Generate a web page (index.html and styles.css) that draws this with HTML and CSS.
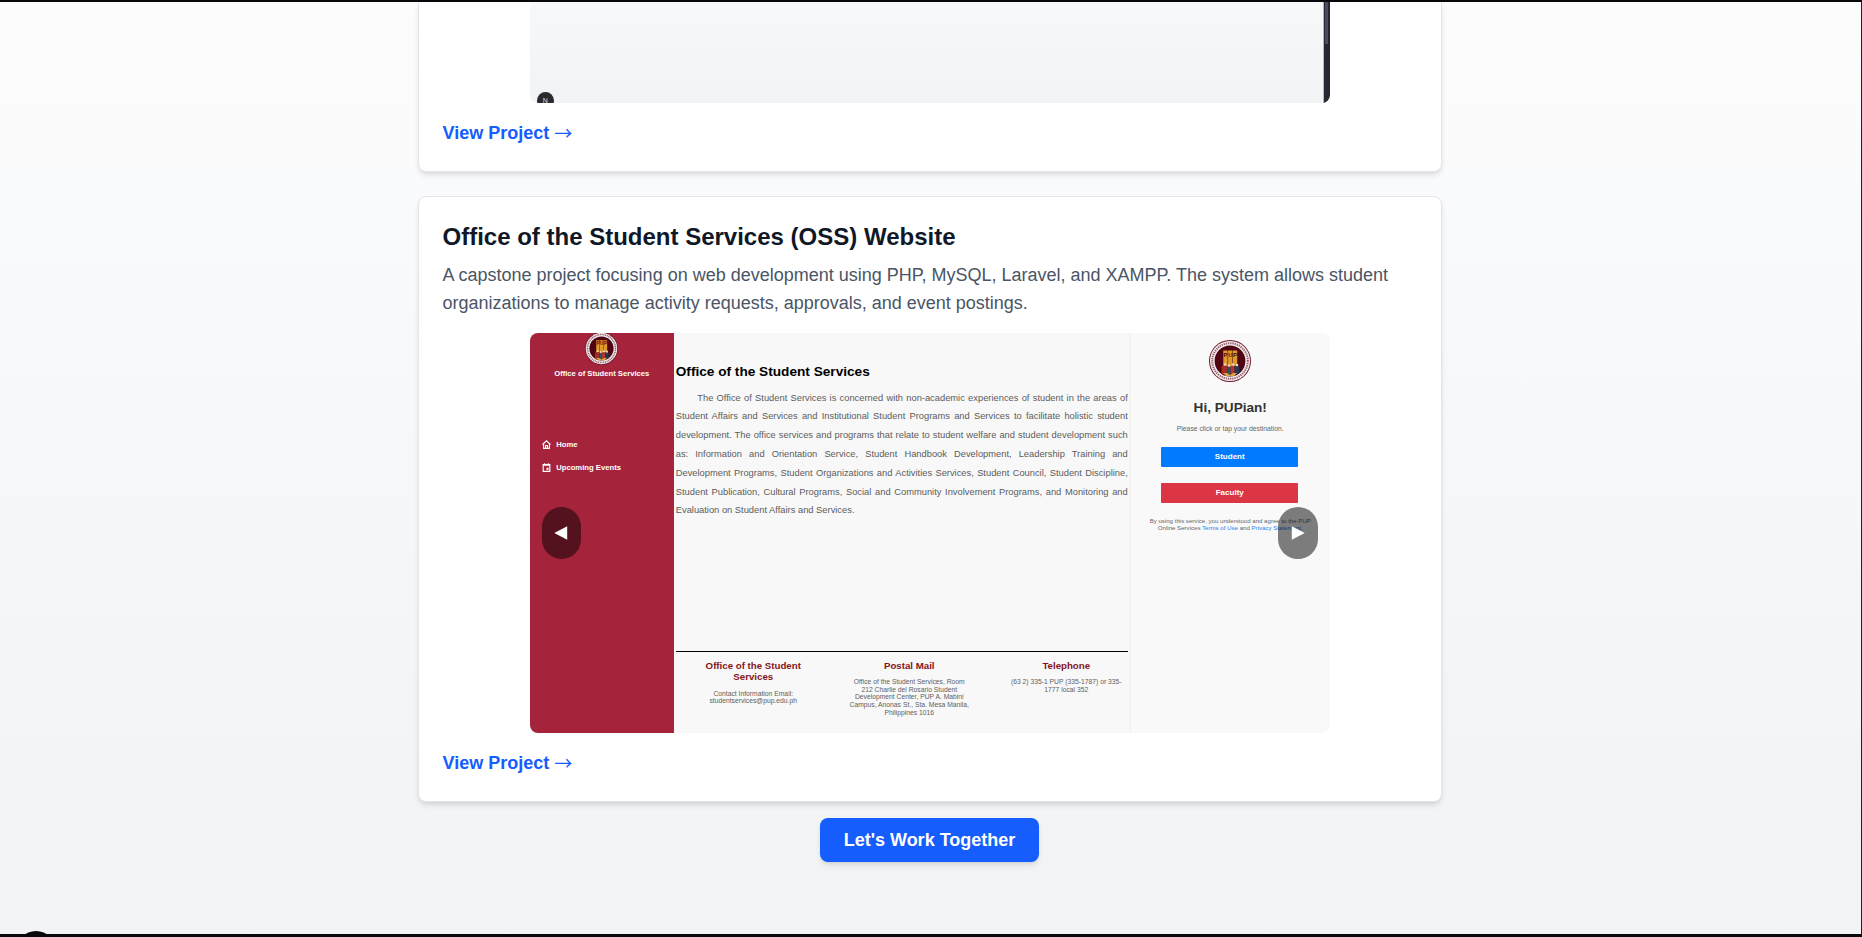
FILE: index.html
```html
<!DOCTYPE html>
<html lang="en">
<head>
<meta charset="utf-8">
<title>Projects</title>
<link rel="stylesheet" href="styles.css">
</head>
<body>
<svg class="defs" width="0" height="0" aria-hidden="true">
  <symbol id="seal" viewBox="0 0 42 42">
    <circle cx="21" cy="21" r="21" fill="#6d1a2c"/>
    <circle cx="21" cy="21" r="20" fill="#f4eeee"/>
    <circle cx="21" cy="21" r="17.8" fill="none" stroke="#96606b" stroke-width="2" stroke-dasharray="1.3 .9"/>
    <circle cx="21" cy="21" r="15.4" fill="#4f0513"/>
    <path d="M14.3 10.5h4.3v16h-4.3zM19.1 10.5h4.3v16h-4.3zM23.9 10.5h4.3v16h-4.3z" fill="#e09a2b"/>
    <path d="M12.6 26l4-1 2 2v7h-6z" fill="#a82a22"/>
    <path d="M18.6 26l3 1v8h-3z" fill="#1d5b6d"/>
    <path d="M21.6 26h4v8h-4z" fill="#b8322a"/>
    <path d="M25.6 25.5l4.6 1v7h-4.6z" fill="#1f3c58"/>
    <path d="M14 33h4l3 2 3-2h4l-3 3h-8z" fill="#d9a441"/>
    <circle cx="16" cy="24.5" r="1.3" fill="#f3d5c0"/><circle cx="20" cy="25.5" r="1.3" fill="#f3d5c0"/>
    <circle cx="24" cy="24.5" r="1.3" fill="#f3d5c0"/><circle cx="28" cy="25" r="1.3" fill="#f3d5c0"/>
    <text x="16.5" y="17" class="seal-letter">P</text><text x="21.3" y="17" class="seal-letter">U</text><text x="26.1" y="17" class="seal-letter">P</text>
  </symbol>
</svg>
<div class="page">
  <main class="column">
    <article class="card card-first">
      <div class="shot shot-first">
        <div class="shot-page"><span class="dev-dot">N</span></div>
        <div class="shot-scroll"><div class="shot-thumb"></div></div>
      </div>
      <a class="link">View Project <span class="link-arrow">→</span></a>
    </article>

    <article class="card">
      <h3 class="title">Office of the Student Services (OSS) Website</h3>
      <p class="desc">A capstone project focusing on web development using PHP, MySQL, Laravel, and XAMPP. The system allows student organizations to manage activity requests, approvals, and event postings.</p>
      <div class="shot oss">
        <aside class="side">
          <svg class="side-logo"><use href="#seal"/></svg>
          <div class="side-name">Office of Student Services</div>
          <nav class="side-nav">
            <div class="side-item"><svg viewBox="0 0 10 10" class="side-icon"><path d="M.6 5L5 .9 9.4 5M1.8 4.3v5h6.4v-5M4 9V6.2h2V9" fill="none" stroke="#fff" stroke-width="1.2"/></svg>Home</div>
            <div class="side-item"><svg viewBox="0 0 10 10" class="side-icon"><path d="M1.3 1.7h7.4v7.6H1.3zM1.3 2.4h7.4M3 .3v1.6M7 .3v1.6" fill="none" stroke="#fff" stroke-width="1.3"/><path d="M5 5.3h2.3v2.5H5z" fill="#fff"/></svg>Upcoming Events</div>
          </nav>
        </aside>
        <section class="about">
          <h4 class="about-title">Office of the Student Services</h4>
          <div class="about-text">
            <div class="row first">The Office of Student Services is concerned with non-academic experiences of student in the areas of</div>
            <div class="row">Student Affairs and Services and Institutional Student Programs and Services to facilitate holistic student</div>
            <div class="row">development. The office services and programs that relate to student welfare and student development such</div>
            <div class="row">as: Information and Orientation Service, Student Handbook Development, Leadership Training and</div>
            <div class="row">Development Programs, Student Organizations and Activities Services, Student Council, Student Discipline,</div>
            <div class="row">Student Publication, Cultural Programs, Social and Community Involvement Programs, and Monitoring and</div>
            <div class="row last">Evaluation on Student Affairs and Services.</div>
          </div>
          <div class="contacts">
            <div class="contact"><h5>Office of the Student<br>Services</h5><p>Contact Information Email:<br>studentservices@pup.edu.ph</p></div>
            <div class="contact"><h5>Postal Mail</h5><p>Office of the Student Services, Room<br>212 Charlie del Rosario Student<br>Development Center, PUP A. Mabini<br>Campus, Anonas St., Sta. Mesa Manila,<br>Philippines 1016</p></div>
            <div class="contact"><h5>Telephone</h5><p>(63 2) 335-1 PUP (335-1787) or 335-<br>1777 local 352</p></div>
          </div>
        </section>
        <section class="login">
          <svg class="login-logo"><use href="#seal"/></svg>
          <div class="hi">Hi, PUPian!</div>
          <div class="hint">Please click or tap your destination.</div>
          <div class="choice student">Student</div>
          <div class="choice faculty">Faculty</div>
          <div class="terms">By using this service, you understood and agree to the PUP<br>Online Services <span>Terms of Use</span> and <span>Privacy Statement</span>.</div>
        </section>
        <button class="arrow prev" aria-label="Previous"><svg viewBox="0 0 14 14"><path d="M13.2.3v13.4L.3 7z" fill="#fff"/></svg></button>
        <button class="arrow next" aria-label="Next"><svg viewBox="0 0 14 14"><path d="M.8.3v13.4L13.7 7z" fill="#fff"/></svg></button>
      </div>
      <a class="link">View Project <span class="link-arrow">→</span></a>
    </article>
    <a class="cta">Let's Work Together</a>
  </main>
  <div class="corner-dot"></div>
</div>
</body>
</html>
```
FILE: styles.css
```css
* { box-sizing: border-box; margin: 0; padding: 0; }
body { font-family: "Liberation Sans", Arial, sans-serif; overflow: hidden; }
.defs { display: none; }
.page {
  position: relative;
  width: 1862px; height: 937px; overflow: hidden;
  border-top: 2px solid #08070b; border-bottom: 3px solid #08070b; border-right: 1px solid #1c2033;
  background: linear-gradient(#fcfcfd 0, #f9fafb 240px, #f3f4f6 760px, #f2f3f5 100%);
}
.column { width: 1024px; margin-left: 418px; display: flex; flex-direction: column; align-items: center; }
.card {
  width: 100%; background: #fff; border: 1px solid #e4e6eb; border-radius: 8px; padding: 24px 24px 24px 23.5px;
  box-shadow: 0 4px 6px -1px rgba(0,0,0,.1), 0 2px 4px -2px rgba(0,0,0,.1);
}
.card-first { border-top: 0; border-radius: 0 0 8px 8px; padding-top: 0; margin-bottom: 24px; }
.title { font-size: 24px; line-height: 32px; font-weight: 700; color: #101828; margin-bottom: 8px; }
.desc { font-size: 18px; line-height: 28px; color: #4a5565; margin-bottom: 16px; }
.link { display: block; height: 28px; font-size: 18px; line-height: 28px; font-weight: 700; color: #155dfc; }
.link-arrow { font-family: "Noto Sans CJK JP", sans-serif; font-weight: 400; line-height: 1; vertical-align: -1px; }
.shot { position: relative; width: 800px; height: 400px; margin: 0 auto 16px; border-radius: 8px; overflow: hidden; display: flex; }
.shot-first { height: 101px; border-radius: 0 0 8px 8px; }
.shot-page { flex: 1; display: flex; align-items: flex-end; padding-left: 7px; background: linear-gradient(#f7f8fa, #f2f3f5); }
.dev-dot { width: 17px; height: 17px; margin-bottom: -6px; border-radius: 50%; background: #2b2b2b; color: #ddd; font-size: 7px; line-height: 17px; text-align: center; }
.shot-scroll { width: 7px; border-left: 1px solid #b7bac2; background: #242832; padding: 0 2px 0 1px; }
.shot-thumb { height: 42px; background: #4a4c66; }

.oss { background: #f8f8f8; }
.side { width: 144px; background: #a6243b; color: #fff; display: flex; flex-direction: column; align-items: center; }
.side-logo { width: 33px; height: 33px; margin-top: -1px; }
.side-name { font-size: 7.65px; font-weight: 700; line-height: 10px; margin-top: 4px; white-space: nowrap; }
.side-nav { align-self: stretch; margin-top: 58px; padding-left: 12px; }
.side-item { display: flex; align-items: center; gap: 5.4px; height: 14px; margin-bottom: 9.6px; font-size: 7.7px; font-weight: 700; white-space: nowrap; }
.side-icon { width: 9px; height: 9px; }
.about { width: 457px; padding: 0 1px 0 2px; border-right: 2px solid #f3f3f3; }
.about-title { margin-top: 30.5px; font-size: 13.65px; line-height: 16px; color: #000; white-space: nowrap; }
.about-text { margin-top: 9.2px; color: #5c5c5c; font-size: 9.33px; }
.row { height: 18.8px; line-height: 18.8px; text-align: justify; text-align-last: justify; white-space: nowrap; }
.first { padding-left: 21.5px; }
.last { text-align-last: left; }
.contacts { margin-top: 130.3px; border-top: 1px solid #000; padding-top: 8px; display: grid; grid-template-columns: 155px 157px 157px; }
.contact { text-align: center; white-space: nowrap; }
.contact:nth-child(n+2) { margin-left: -0.5px; margin-right: -0.5px; }
.contact h5 { font-size: 9.7px; line-height: 11.8px; color: #851420; }
.contact p { margin-top: 6.6px; font-size: 6.75px; line-height: 7.65px; color: #606060; }
.login { flex: 1; background: #f9f9f9; display: flex; flex-direction: column; align-items: center; }
.login-logo { width: 42px; height: 42px; margin-top: 7px; }
.hi { margin-top: 18px; font-size: 13.6px; line-height: 16px; font-weight: 700; color: #333; }
.hint { margin-top: 9px; font-size: 6.8px; line-height: 8px; color: #666; }
.choice { width: 137px; height: 20px; margin-right: 1px; border-radius: 1px; color: #fff; font-size: 8px; line-height: 20px; font-weight: 700; text-align: center; }
.student { margin-top: 14px; background: #007bff; }
.faculty { margin-top: 16px; background: #dc3545; }
.terms { margin-top: 15px; font-size: 6.1px; line-height: 6.7px; color: #666; text-align: center; white-space: nowrap; }
.terms span { color: #1684ef; }
.arrow { position: absolute; top: 174px; width: 40px; height: 52px; border: 0; border-radius: 20px; background: rgba(0,0,0,.5); display: flex; align-items: center; justify-content: center; }
.arrow svg { width: 14px; height: 14px; }
.prev { left: 12px; width: 39px; }
.next { right: 12px; }
.seal-letter { font: 700 6px "Liberation Sans", sans-serif; fill: #4f0513; text-anchor: middle; }
.cta { margin-top: 16px; margin-right: 1px; padding: 8px 23.5px; border-radius: 8px; background: #155dfc; color: #fff; font-size: 18px; line-height: 28px; font-weight: 700; box-shadow: 0 4px 6px -1px rgba(0,0,0,.1), 0 2px 4px -2px rgba(0,0,0,.1); }
.corner-dot { position: absolute; left: 16px; top: 929px; width: 40px; height: 40px; border-radius: 50%; background: #08070b; }
```
